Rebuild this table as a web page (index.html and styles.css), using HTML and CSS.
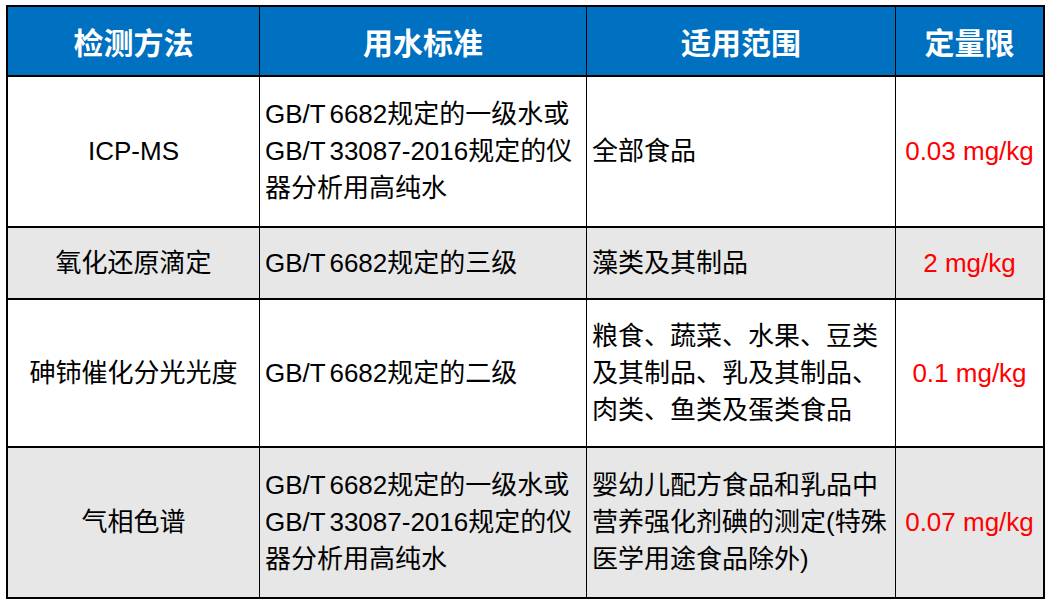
FILE: index.html
```html
<!DOCTYPE html>
<html lang="zh">
<head>
<meta charset="utf-8">
<link rel="stylesheet" href="styles.css">
</head>
<body>
<div class="page">
  <div class="grid">
    <div class="cell head">检测方法</div>
    <div class="cell head">用水标准</div>
    <div class="cell head">适用范围</div>
    <div class="cell head">定量限</div>

    <div class="cell center">ICP-MS</div>
    <div class="cell left std">GB/T 6682规定的一级水或<br>GB/T 33087-2016规定的仪<br>器分析用高纯水</div>
    <div class="cell left">全部食品</div>
    <div class="cell center red">0.03 mg/kg</div>

    <div class="cell center grey">氧化还原滴定</div>
    <div class="cell left std grey">GB/T 6682规定的三级</div>
    <div class="cell left grey">藻类及其制品</div>
    <div class="cell center red grey">2 mg/kg</div>

    <div class="cell center">砷铈催化分光光度</div>
    <div class="cell left std">GB/T 6682规定的二级</div>
    <div class="cell left">粮食、蔬菜、水果、豆类<br>及其制品、乳及其制品、<br>肉类、鱼类及蛋类食品</div>
    <div class="cell center red">0.1 mg/kg</div>

    <div class="cell center grey">气相色谱</div>
    <div class="cell left std grey">GB/T 6682规定的一级水或<br>GB/T 33087-2016规定的仪<br>器分析用高纯水</div>
    <div class="cell left grey">婴幼儿配方食品和乳品中<br>营养强化剂碘的测定(特殊<br>医学用途食品除外)</div>
    <div class="cell center red grey">0.07 mg/kg</div>
  </div>
</div>
</body>
</html>
```

FILE: styles.css
```css
html, body {
  margin: 0;
  padding: 0;
  background: #ffffff;
}

.page {
  padding: 5px 0 0 6px;
}

.grid {
  display: grid;
  width: 1035px;
  grid-template-columns: 251px 326px 308px 147px;
  grid-template-rows: 68px 149px 70px 146px 149px;
  column-gap: 1px;
  row-gap: 2px;
  background: #000000;
  border: 2px solid #000000;
  font-family: "Liberation Sans", "Noto Sans CJK SC", sans-serif;
  font-size: 26px;
  line-height: 37px;
  color: #000000;
}

.cell {
  background: #ffffff;
  display: flex;
  align-items: center;
  white-space: nowrap;
}

.head {
  background: #0070c0;
  color: #ffffff;
  font-weight: bold;
  font-size: 30px;
  justify-content: center;
  font-family: "Noto Sans CJK SC", sans-serif;
}

.center {
  justify-content: center;
  text-align: center;
}

.left {
  justify-content: flex-start;
  padding-left: 5px;
}

.std {
  word-spacing: -3px;
}

.grey {
  background: #e7e7e7;
}

.red {
  color: #ff0000;
}
```
